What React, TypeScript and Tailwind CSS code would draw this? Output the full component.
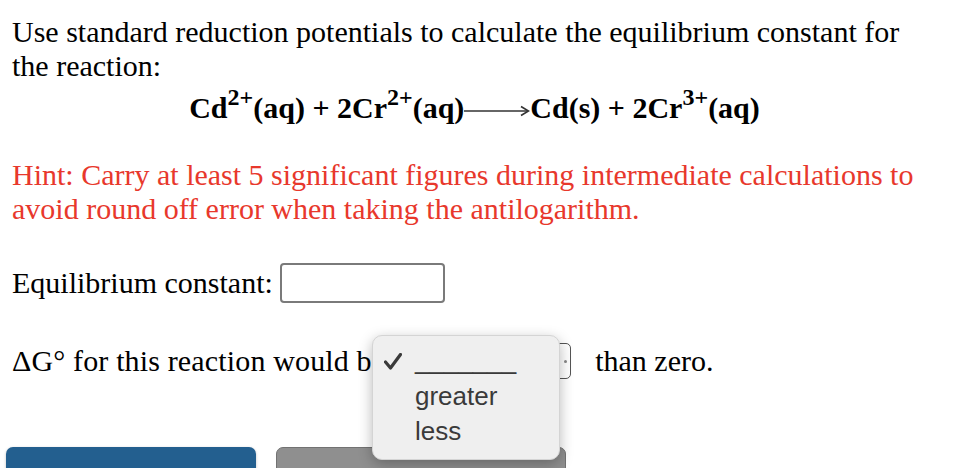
const serif = "font-['Liberation_Serif','Times_New_Roman',serif]";
const sans = "font-['Liberation_Sans',Arial,sans-serif]";

function ReactionArrow() {
    return (
        <svg width="66" height="14" viewBox="0 0 66 14" className="inline-block align-baseline">
            <line x1="0" y1="7" x2="64" y2="7" stroke="#333" strokeWidth="1.6" />
            <polyline points="57,2.5 64.5,7 57,11.5" fill="none" stroke="#333" strokeWidth="1.6" />
        </svg>
    );
}

function CheckMark() {
    return (
        <svg width="18" height="17" viewBox="0 0 18 17" className="block">
            <polyline points="1.5,9 6.5,15 16.5,1.5" fill="none" stroke="#3a3a3a" strokeWidth="3.2" strokeLinecap="round" strokeLinejoin="round" />
        </svg>
    );
}

function Sup({ children }: { children: string }) {
    return <sup className="top-[-0.55em] text-[80%]">{children}</sup>;
}

export default function App() {
    const options = ["_______", "greater", "less"];

    return (
        <div className={`relative h-[468px] overflow-hidden bg-white text-black ${serif}`}>
            <div className="w-[937px] pl-[12px] pt-[15px] text-[30px] leading-[34px]">
                <p>Use standard reduction potentials to calculate the equilibrium constant for the reaction:</p>

                <p className="mt-[8px] text-center font-bold">
                    Cd<Sup>2+</Sup>(aq) + 2Cr<Sup>2+</Sup>(aq)<ReactionArrow />Cd(s) + 2Cr<Sup>3+</Sup>(aq)
                </p>

                <p className="mt-[33px] text-[#e8382c]">
                    Hint: Carry at least 5 significant figures during intermediate calculations to avoid round off error when taking the antilogarithm.
                </p>

                <div className="mt-[37px] flex items-center">
                    <span>Equilibrium constant:</span>
                    <input
                        type="text"
                        className="ml-[7px] h-[40px] w-[165px] rounded-[4px] border-2 border-[#7a7a7a] bg-white outline-none"
                    />
                </div>

                <div className="mt-[40px] flex items-center">
                    <span className="tracking-[0.15px]">ΔG° for this reaction would be</span>
                    <div className="ml-[6px] flex h-[36px] w-[180px] items-center justify-end rounded-[5px] border-[1.5px] border-[#555] pr-[3px]">
                        <span className="h-[3px] w-[3px] rounded-full bg-[#888]" />
                    </div>
                    <span className="ml-[24px]">than zero.</span>
                </div>
            </div>

            <div className="mt-[68px] flex gap-[20px] pl-[6px]">
                <button className="h-[44px] w-[250px] rounded-[7px] bg-[#235f8f] shadow-[0_1px_3px_rgba(0,0,0,0.25)]" />
                <button className="h-[44px] w-[290px] rounded-[7px] border border-[#727272] bg-[#8f8f8f]" />
            </div>

            <div className={`absolute left-[372px] top-[335px] h-[125px] w-[188px] rounded-[10px] border border-[#d4d4d4] bg-[#efefef] pt-[7px] shadow-[0_4px_14px_rgba(0,0,0,0.28)] ${sans}`}>
                <div className="absolute left-[11px] top-[17px]">
                    <CheckMark />
                </div>
                <ul className="pl-[42px] text-[26px] leading-[35.5px] text-[#3a3a3a]">
                    {options.map((o) => (
                        <li key={o}>{o}</li>
                    ))}
                </ul>
            </div>
        </div>
    );
}
